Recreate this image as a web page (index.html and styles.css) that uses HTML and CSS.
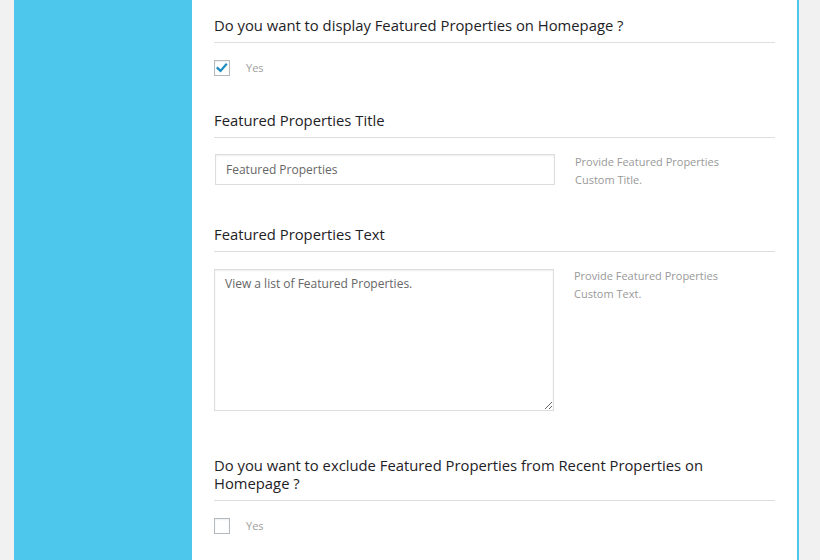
FILE: index.html
```html
<!DOCTYPE html>
<html>
<head>
<meta charset="utf-8">
<link rel="stylesheet" href="styles.css">
</head>
<body>
<div class="page">
  <div class="gutter"></div>
  <aside class="sidebar"></aside>
  <main class="main">
    <section class="section first">
      <h3 class="title">Do you want to display Featured Properties on Homepage ?</h3>
      <div class="field">
        <label class="check-row">
          <span class="checkbox checked">
            <svg viewBox="0 0 16 16" width="14" height="14"><path d="M3 8.2 L6.3 11.3 L12.6 4.2" fill="none" stroke="#1e8cbe" stroke-width="2.6" stroke-linecap="square" stroke-linejoin="miter"/></svg>
          </span>
          <span class="check-label">Yes</span>
        </label>
      </div>
    </section>

    <section class="section">
      <h3 class="title">Featured Properties Title</h3>
      <div class="field row">
        <input class="text-input" type="text" value="Featured Properties">
        <p class="desc">Provide Featured Properties Custom Title.</p>
      </div>
    </section>

    <section class="section">
      <h3 class="title">Featured Properties Text</h3>
      <div class="field row tall">
        <textarea class="text-area">View a list of Featured Properties.</textarea>
        <p class="desc">Provide Featured Properties Custom Text.</p>
      </div>
    </section>

    <section class="section">
      <h3 class="title">Do you want to exclude Featured Properties from Recent Properties on Homepage ?</h3>
      <div class="field">
        <label class="check-row">
          <span class="checkbox"></span>
          <span class="check-label">Yes</span>
        </label>
      </div>
    </section>
  </main>
  <div class="gutter-right"></div>
</div>
</body>
</html>
```

FILE: styles.css
```css
* { box-sizing: border-box; }

html, body {
  margin: 0;
  padding: 0;
  background: #f1f1f1;
  font-family: "Open Sans", "Noto Sans", sans-serif;
}

.page {
  display: flex;
  min-height: 560px;
}

.gutter {
  width: 14px;
  flex: none;
  background: #f1f1f1;
}

.sidebar {
  width: 178px;
  flex: none;
  background: #4dc7eb;
}

.main {
  width: 607px;
  flex: none;
  background: #ffffff;
  border-right: 2px solid #4dc7eb;
  padding: 17px 22px 60px 22px;
}

.gutter-right {
  flex: 1;
  background: #f1f1f1;
}

.section {
  margin-top: 36px;
}

.section.first {
  margin-top: 0;
}

.title {
  margin: -1px 0 0 0;
  font-size: 14.8px;
  line-height: 18px;
  font-weight: 400;
  color: #1e2226;
  padding: 0 20px 8px 0;
  border-bottom: 1px solid #dedede;
}

.field {
  margin-top: 17px;
}

.check-row {
  display: flex;
  align-items: center;
  height: 16px;
}

.checkbox {
  width: 16px;
  height: 16px;
  border: 1px solid #b4b9be;
  background: #fff;
  box-shadow: inset 0 1px 2px rgba(0, 0, 0, 0.07);
  display: flex;
  align-items: center;
  justify-content: center;
}

.check-label {
  margin-left: 16px;
  font-size: 11px;
  color: #a0a0a0;
  line-height: 16px;
  margin-top: -1px;
}

.row {
  display: flex;
  align-items: flex-start;
  padding-bottom: 1px;
}

.text-input {
  width: 340px;
  height: 31px;
  margin: -1px 0 0 1px;
  padding: 0 10px;
  border: 1px solid #dddddd;
  box-shadow: inset 0 1px 2px rgba(0, 0, 0, 0.07);
  font-family: "Open Sans", "Noto Sans", sans-serif;
  font-size: 12px;
  color: #666666;
  background: #fff;
  outline: none;
}

.text-area {
  display: block;
  width: 340px;
  height: 142px;
  margin: 0;
  padding: 5px 10px;
  border: 1px solid #dddddd;
  box-shadow: inset 0 1px 2px rgba(0, 0, 0, 0.07);
  font-family: "Open Sans", "Noto Sans", sans-serif;
  font-size: 12px;
  line-height: 18px;
  color: #666666;
  background: #fff;
  resize: both;
  outline: none;
}

.row.tall {
  padding-bottom: 10px;
}

.desc {
  margin: -2px 0 0 20px;
  width: 180px;
  font-size: 11px;
  line-height: 18px;
  color: #999999;
}
```
